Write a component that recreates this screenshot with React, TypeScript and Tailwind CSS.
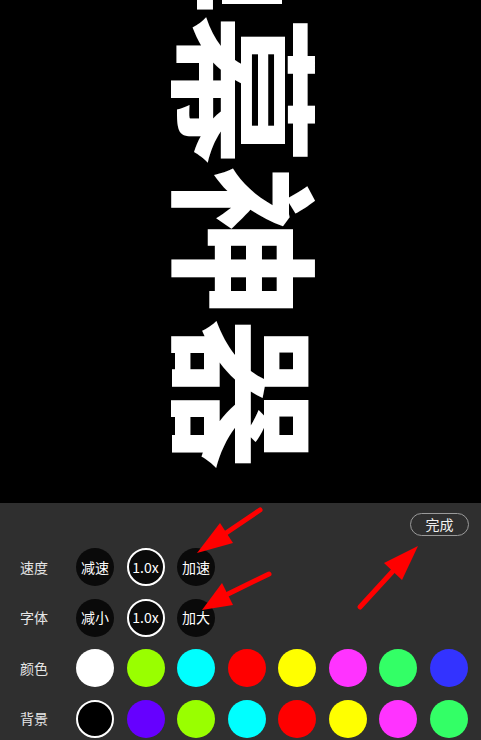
import React from 'react';

const textColors = ['#ffffff', '#99ff00', '#00ffff', '#ff0000', '#ffff00', '#ff33ff', '#33ff66', '#3333ff'];
const bgColors = ['#000000', '#6600ff', '#99ff00', '#00ffff', '#ff0000', '#ffff00', '#ff33ff', '#33ff66'];

const font = { fontFamily: '"Noto Sans CJK SC", "Noto Sans", sans-serif' };

const RoundButton: React.FC<{ label: string; active?: boolean }> = ({ label, active }) => (
  <div
    className={`w-[38px] h-[38px] rounded-full bg-[#0a0a0a] flex items-center justify-center text-[14px] text-white shrink-0 ${
      active ? 'border-2 border-white' : ''
    }`}
  >
    {label}
  </div>
);

const Row: React.FC<{ label: string; children: React.ReactNode }> = ({ label, children }) => (
  <div className="flex items-center h-[38px]">
    <div className="w-[76px] pl-5 text-[14px] text-[#e6e6e6] shrink-0">{label}</div>
    <div className="flex gap-[12.5px]">{children}</div>
  </div>
);

const Swatch: React.FC<{ color: string; ring?: boolean }> = ({ color, ring }) => (
  <div
    className={`w-[38px] h-[38px] rounded-full shrink-0 ${ring ? 'border-2 border-white' : ''}`}
    style={{ backgroundColor: color }}
  />
);

export default function App() {
  return (
    <div className="relative w-[481px] h-[740px] bg-black overflow-hidden" style={font}>
      {/* danmaku preview */}
      <div className="h-[503px] flex items-center justify-center overflow-hidden">
        <span className="shrink-0 whitespace-nowrap text-[152px] leading-none font-bold text-white translate-x-[10px] -translate-y-[86px] rotate-90">
          弹幕神器
        </span>
      </div>

      {/* settings panel */}
      <div className="h-[237px] bg-[#2f2f2f] pt-[10px]">
        <div className="flex justify-end pr-3">
          <div className="w-[59px] h-[23px] rounded-full border border-[#9a9a9a] flex items-center justify-center text-[14px] text-[#f0f0f0]">
            完成
          </div>
        </div>
        <div className="mt-[12px] flex flex-col gap-[12.5px]">
          <Row label="速度">
            <RoundButton label="减速" />
            <RoundButton label="1.0x" active />
            <RoundButton label="加速" />
          </Row>
          <Row label="字体">
            <RoundButton label="减小" />
            <RoundButton label="1.0x" active />
            <RoundButton label="加大" />
          </Row>
          <Row label="颜色">
            {textColors.map((c) => (
              <Swatch key={c} color={c} />
            ))}
          </Row>
          <Row label="背景">
            {bgColors.map((c, i) => (
              <Swatch key={c} color={c} ring={i === 0} />
            ))}
          </Row>
        </div>
      </div>

      {/* red annotation arrows */}
      <svg className="absolute inset-0 pointer-events-none" width="481" height="740" viewBox="0 0 481 740">
        <g stroke="#ff0000" strokeWidth="5" strokeLinecap="round" fill="#ff0000">
          <line x1="260" y1="510" x2="226" y2="533" />
          <polygon points="197,553 220,523 233,543" strokeWidth="0" />
          <line x1="269" y1="574" x2="228" y2="594" />
          <polygon points="202,610 222,583 233,605" strokeWidth="0" />
          <line x1="360" y1="607" x2="393" y2="571" />
          <polygon points="418,546 384,563 402,580" strokeWidth="0" />
        </g>
      </svg>
    </div>
  );
}
